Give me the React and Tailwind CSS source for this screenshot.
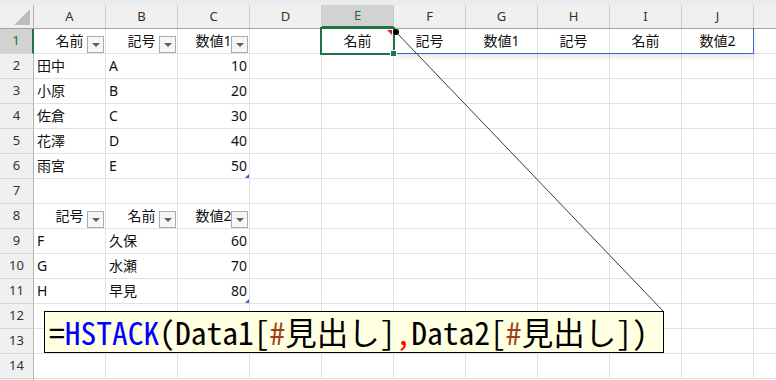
import React from 'react';

const COLS = ['A', 'B', 'C', 'D', 'E', 'F', 'G', 'H', 'I', 'J'];

// cell contents by row -> column
const DATA = {
  1: {
    A: { t: '名前', hdr: true },
    B: { t: '記号', hdr: true },
    C: { t: '数値1', hdr: true },
    E: { t: '名前', mid: true },
    F: { t: '記号', mid: true },
    G: { t: '数値1', mid: true },
    H: { t: '記号', mid: true },
    I: { t: '名前', mid: true },
    J: { t: '数値2', mid: true },
  },
  2: { A: { t: '田中' }, B: { t: 'A' }, C: { t: '10', num: true } },
  3: { A: { t: '小原' }, B: { t: 'B' }, C: { t: '20', num: true } },
  4: { A: { t: '佐倉' }, B: { t: 'C' }, C: { t: '30', num: true } },
  5: { A: { t: '花澤' }, B: { t: 'D' }, C: { t: '40', num: true } },
  6: { A: { t: '雨宮' }, B: { t: 'E' }, C: { t: '50', num: true, grip: true } },
  8: {
    A: { t: '記号', hdr: true },
    B: { t: '名前', hdr: true },
    C: { t: '数値2', hdr: true },
  },
  9: { A: { t: 'F' }, B: { t: '久保' }, C: { t: '60', num: true } },
  10: { A: { t: 'G' }, B: { t: '水瀬' }, C: { t: '70', num: true } },
  11: { A: { t: 'H' }, B: { t: '早見' }, C: { t: '80', num: true, grip: true } },
};

function Dropdown() {
  return (
    <div className="absolute right-[1px] bottom-0 w-[17px] h-[17px] border border-[#a9adb2] bg-[#f6f6f6] flex items-center justify-center">
      <div className="w-0 h-0 border-l-[4px] border-r-[4px] border-t-[4px] border-l-transparent border-r-transparent border-t-[#5c5c5c]" />
    </div>
  );
}

function Cell({ cell }) {
  let align = 'justify-start pl-[3px]';
  if (cell && cell.num) align = 'justify-end pr-[2px]';
  if (cell && (cell.hdr || cell.mid)) align = 'justify-center';
  return (
    <div className={`relative w-[72px] shrink-0 h-full border-r border-b border-[#e1e1e1] flex items-center text-[14px] text-[#111] ${align}`}>
      {cell && <span className="leading-none">{cell.t}</span>}
      {cell && cell.hdr && <Dropdown />}
      {cell && cell.grip && (
        <div className="absolute right-0 bottom-0 w-0 h-0 border-l-[4px] border-b-[4px] border-l-transparent border-b-[#3f5fbf]" />
      )}
    </div>
  );
}

function Row({ n }) {
  const sel = n === 1;
  const row = DATA[n] || {};
  return (
    <div className="flex h-[25px]">
      <div
        className={`w-[34px] shrink-0 h-full flex items-center justify-center text-[13px] border-b border-b-[#d6d6d6] ${
          sel
            ? 'bg-[#d2d2d2] text-[#1d6b3f] border-r-2 border-r-[#217346]'
            : 'bg-[#f0f0f0] text-[#333] border-r border-r-[#b3b3b3]'
        }`}
      >
        {n}
      </div>
      {COLS.map((c) => (
        <Cell key={c} cell={row[c]} />
      ))}
      <div className="flex-1 h-full border-b border-[#e1e1e1]" />
    </div>
  );
}

export default function App() {
  const rows = Array.from({ length: 14 }, (_, i) => i + 1);
  return (
    <div className="relative w-[776px] h-[380px] overflow-hidden bg-white font-['Noto_Sans','Noto_Sans_CJK_JP',sans-serif]">
      <div className="h-[5px] bg-[#e9ecef]" />

      {/* column headers */}
      <div className="flex h-[24px] bg-[#f0f0f0] border-b border-[#a3a3a3]">
        <div className="relative w-[34px] shrink-0 h-full border-r border-[#b3b3b3]">
          <svg className="absolute left-[14px] top-[4px]" width="16" height="16" viewBox="0 0 16 16">
            <polygon points="16,0 16,16 0,16" fill="#bdbdbd" />
          </svg>
        </div>
        {COLS.map((c) => (
          <div
            key={c}
            className={`w-[72px] shrink-0 h-full flex items-center justify-center text-[13px] border-r border-[#cbcbcb] ${
              c === 'E' ? 'bg-[#d2d2d2] text-[#1d6b3f] border-b-2 border-b-[#217346]' : 'text-[#333]'
            }`}
          >
            {c}
          </div>
        ))}
        <div className="flex-1" />
      </div>

      {rows.map((n) => (
        <Row key={n} n={n} />
      ))}
      {/* sliver of row 15 */}
      <div className="flex h-[1px]">
        <div className="w-[34px] shrink-0 h-full bg-[#f0f0f0] border-r border-[#b3b3b3]" />
      </div>

      {/* spill range outline */}
      <div className="absolute left-[393px] top-[28px] w-[361px] h-[26px] border-b border-r border-[#3b66c4] shadow-[0_3px_6px_rgba(0,0,0,0.10)]" />

      {/* active cell E1 */}
      <div className="absolute left-[320px] top-[27px] w-[75px] h-[28px] border-2 border-[#217346]" />
      <div className="absolute left-[387px] top-[30px] w-0 h-0 border-l-[5px] border-t-[5px] border-l-transparent border-t-[#e81123]" />
      <div className="absolute left-[390px] top-[50px] w-[7px] h-[7px] bg-[#217346] border border-white" />

      {/* comment connector */}
      <svg className="absolute left-0 top-0 pointer-events-none" width="776" height="380" viewBox="0 0 776 380">
        <line x1="396" y1="32" x2="663" y2="311" stroke="#3a3a3a" strokeWidth="1" />
        <circle cx="396" cy="32" r="3" fill="#000" />
      </svg>

      {/* comment box */}
      <div className="absolute left-[44px] top-[311px] w-[620px] h-[42px] bg-[#ffffe1] border border-black flex items-center pl-[4px] whitespace-nowrap text-[31.5px] leading-none text-black font-['Noto_Sans_Mono_CJK_JP','Liberation_Mono','Noto_Sans_CJK_JP',monospace]">
        <span>=</span>
        <span className="text-[#0000ff]">HSTACK</span>
        <span>(Data1[</span>
        <span className="text-[#a0401a]">#</span>
        <span>見出し]</span>
        <span className="text-[#ff0000]">,</span>
        <span>Data2[</span>
        <span className="text-[#a0401a]">#</span>
        <span>見出し])</span>
      </div>
    </div>
  );
}
